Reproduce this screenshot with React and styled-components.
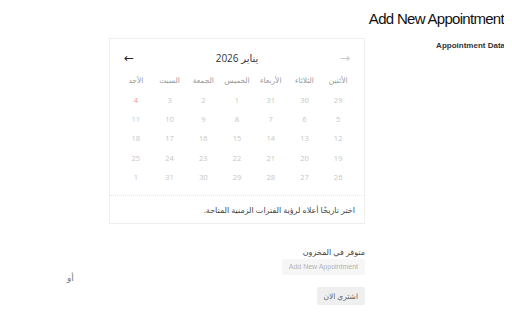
import React from "react";
import styled, { createGlobalStyle } from "styled-components";

const GlobalStyle = createGlobalStyle`
  body {
    margin: 8px;
    direction: rtl;
    background: #fff;
    font-family: "Open Sans", "DejaVu Sans", sans-serif;
  }
`;

const Title = styled.h1`
  margin: 2px 0 0 0;
  font-family: "Liberation Sans", Arial, sans-serif;
  font-size: 15px;
  letter-spacing: -0.7px;
  font-weight: normal;
  color: #111;
  line-height: 18px;
  text-align: right;
`;

const Layout = styled.div`
  display: flex;
  margin-top: 10px;
`;

const Side = styled.div`
  width: 139px;
  flex-shrink: 0;
`;

const SideLabel = styled.div`
  font-family: "Liberation Sans", Arial, sans-serif;
  font-size: 8px;
  font-weight: bold;
  color: #333;
  padding-top: 3px;
  margin-right: -1px;
`;

const Content = styled.div`
  flex: 1;
  display: flex;
  flex-direction: column;
  align-items: flex-start;
`;

const CalendarBox = styled.div`
  width: 256px;
  box-sizing: border-box;
  border: 1px solid #efefef;
  padding-top: 11px;
`;

const Header = styled.div`
  display: flex;
  align-items: center;
  justify-content: space-between;
  height: 16px;
  padding: 0 14px;
`;

const Arrow = styled.span`
  font-size: 12px;
  color: ${(p) => (p.$disabled ? "#c9c9c9" : "#222")};
  line-height: 16px;
`;

const MonthTitle = styled.span`
  font-size: 10px;
  color: #333;
`;

const Grid = styled.div`
  display: grid;
  grid-template-columns: repeat(7, 1fr);
  padding: 0 9px;
  margin-top: 3px;
`;

const WeekDay = styled.div`
  height: 21px;
  display: flex;
  align-items: center;
  justify-content: center;
  font-size: 7.5px;
  color: #999;
`;

const Day = styled.div`
  height: 19.4px;
  display: flex;
  align-items: center;
  justify-content: center;
  font-size: 7.5px;
  color: ${(p) => (p.$today ? "#f2979c" : "#c6c6c6")};
`;

const Footer = styled.div`
  margin-top: 8px;
  border-top: 1px dotted #e8e8e8;
  padding: 8px 9px 7px;
  font-size: 8px;
  line-height: 12px;
  color: #444;
`;

const Stock = styled.div`
  margin-top: 22px;
  display: flex;
  align-items: center;
  width: 100%;
`;

const StockColumn = styled.div`
  display: flex;
  flex-direction: column;
  align-items: flex-start;
`;

const StockLabel = styled.div`
  font-size: 8px;
  color: #444;
  line-height: 12px;
`;

const Button = styled.button`
  font-family: ${(p) =>
    p.$latin ? '"Liberation Sans", Arial, sans-serif' : '"Open Sans", "DejaVu Sans", sans-serif'};
  border: none;
  border-radius: 2px;
  padding: 0 7px;
  height: ${(p) => (p.$latin ? "16px" : "18px")};
  margin-top: ${(p) => (p.$latin ? "1px" : "12px")};
  background: ${(p) => (p.$latin ? "#f6f6f6" : "#efefef")};
  color: ${(p) => (p.$latin ? "#b3b3b3" : "#666")};
  font-size: ${(p) => (p.$latin ? "7px" : "7.5px")};
  white-space: nowrap;
`;

const Or = styled.span`
  font-size: 9px;
  color: #777;
  margin-right: 208px;
  margin-top: 4px;
`;

const weekDays = ["الأثنين", "الثلاثاء", "الأربعاء", "الخميس", "الجمعة", "السبت", "الأحد"];
const days = [
  29, 30, 31, 1, 2, 3, 4,
  5, 6, 7, 8, 9, 10, 11,
  12, 13, 14, 15, 16, 17, 18,
  19, 20, 21, 22, 23, 24, 25,
  26, 27, 28, 29, 30, 31, 1,
];

export default function App() {
  return (
    <>
      <GlobalStyle />
      <Title>Add New Appointment</Title>
      <Layout>
        <Side>
          <SideLabel>Appointment Data</SideLabel>
        </Side>
        <Content>
          <CalendarBox>
            <Header>
              <Arrow $disabled>→</Arrow>
              <MonthTitle>يناير 2026</MonthTitle>
              <Arrow>←</Arrow>
            </Header>
            <Grid>
              {weekDays.map((d) => (
                <WeekDay key={d}>{d}</WeekDay>
              ))}
              {days.map((d, i) => (
                <Day key={i} $today={i === 6}>
                  {d}
                </Day>
              ))}
            </Grid>
            <Footer>اختر تاريخًا أعلاه لرؤية الفترات الزمنية المتاحة.</Footer>
          </CalendarBox>
          <Stock>
            <StockColumn>
              <StockLabel>متوفر في المخزون</StockLabel>
              <Button $latin>Add New Appointment</Button>
              <Button>اشتري الان</Button>
            </StockColumn>
            <Or>أو</Or>
          </Stock>
        </Content>
      </Layout>
    </>
  );
}
